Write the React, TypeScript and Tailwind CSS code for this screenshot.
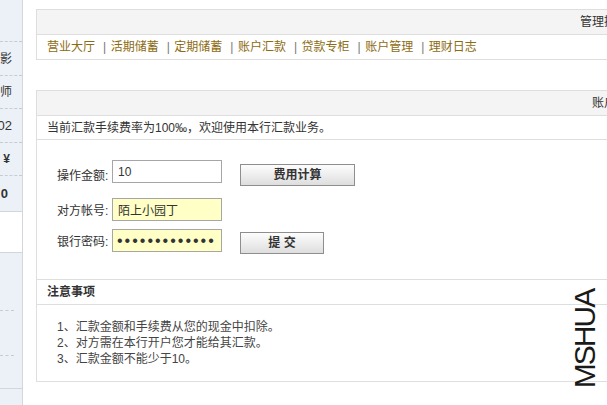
import React from 'react';

const navItems = ['营业大厅', '活期储蓄', '定期储蓄', '账户汇款', '贷款专柜', '账户管理', '理财日志'];

const notes = [
  '1、汇款金额和手续费从您的现金中扣除。',
  '2、对方需在本行开户您才能给其汇款。',
  '3、汇款金额不能少于10。',
];

const App: React.FC = () => {
  return (
    <div className="relative flex w-[607px] h-[405px] overflow-hidden bg-white text-[12px] leading-[16px] text-[#333] font-['Liberation_Sans','Noto_Sans_CJK_SC',sans-serif]">
      {/* 左侧栏（被裁切） */}
      <aside className="w-[23px] shrink-0 flex flex-col overflow-hidden border-r border-[#d2d7de] bg-[#ecf1f8]">
        <div className="h-[42px] shrink-0 border-b border-dashed border-[#c6ccd4]" />
        <div className="h-[34px] shrink-0 flex items-center justify-end pr-[10px] border-b border-dashed border-[#c6ccd4] whitespace-nowrap">
          <span>摄影</span>
        </div>
        <div className="h-[33px] shrink-0 flex items-center justify-end pr-[10px] border-b border-dashed border-[#c6ccd4] whitespace-nowrap">
          <span>魔法师</span>
        </div>
        <div className="h-[34px] shrink-0 flex items-center justify-end pr-[10px] border-b border-dashed border-[#c6ccd4] whitespace-nowrap text-[13px]">
          <span>2013-01-02</span>
        </div>
        <div className="h-[33px] shrink-0 flex items-center justify-end pr-[12px] border-b border-dashed border-[#c6ccd4] whitespace-nowrap font-bold">
          <span>¥</span>
        </div>
        <div className="h-[36px] shrink-0 flex items-center justify-end pr-[14px] border-b border-[#d2d7de] whitespace-nowrap font-bold text-[13px]">
          <span>0</span>
        </div>
        <div className="h-[41px] shrink-0 bg-white border-b border-[#d2d7de]" />
        <div className="h-[58px] shrink-0 border-b border-dashed border-[#c6ccd4] mr-[8px]" />
        <div className="h-[45px] shrink-0 border-b border-dashed border-[#c6ccd4] mr-[8px]" />
        <div className="h-[33px] shrink-0 border-b border-[#d2d7de]" />
        <div className="flex-1" />
      </aside>

      {/* 主区域 */}
      <main className="ml-[13px] shrink-0 w-[615px]">
        {/* 管理面板 */}
        <div className="mt-[9px] border border-[#dedede]">
          <div className="h-[25px] flex items-center justify-end pr-[10px] bg-[#f4f4f4] border-b border-[#dedede]">
            管理操作区
          </div>
          <div className="h-[24px] flex items-center pl-[10px] whitespace-nowrap">
            {navItems.map((item, i) => (
              <React.Fragment key={item}>
                {i > 0 && <span className="ml-[8px] mr-[4.5px] text-[#777]">|</span>}
                <a className="text-[#8d6b12]">{item}</a>
              </React.Fragment>
            ))}
          </div>
        </div>

        {/* 账户汇款 */}
        <div className="mt-[30px] border border-[#dedede]">
          <div className="h-[25px] flex items-center justify-end pr-[10px] bg-[#f4f4f4] border-b border-[#dedede]">
            账户汇款
          </div>
          <div className="h-[24px] flex items-center pl-[10px] border-b border-[#dedede] whitespace-nowrap">
            当前汇款手续费率为100‰，欢迎使用本行汇款业务。
          </div>

          {/* 表单 */}
          <div className="h-[140px] pl-[20px] pt-[20px] border-b border-[#dedede]">
            <div className="flex items-start h-[27px]">
              <label className="w-[55px] mt-[8px]">操作金额:</label>
              <input
                readOnly
                value="10"
                className="w-[110px] h-[23px] px-[5px] border border-[#a6a6a6] bg-white text-[12px] outline-none"
              />
              <button className="ml-[18px] mt-[4px] w-[115px] h-[22px] border border-[#8e8e8e] bg-linear-to-b from-[#fdfdfd] to-[#dedede] font-bold text-[#333]">
                费用计算
              </button>
            </div>
            <div className="flex items-start h-[23px] mt-[11px]">
              <label className="w-[55px] mt-[5px]">对方帐号:</label>
              <input
                readOnly
                value="陌上小园丁"
                className="w-[110px] h-[23px] px-[5px] border border-[#a6a6a6] bg-[#ffffc6] text-[12px] outline-none"
              />
            </div>
            <div className="flex items-start h-[25px] mt-[8px]">
              <label className="w-[55px] mt-[5px]">银行密码:</label>
              <input
                readOnly
                type="password"
                value="1234567890123"
                className="w-[110px] h-[23px] px-[4px] border border-[#a6a6a6] bg-[#ffffc6] text-[16px] tracking-[2px] text-[#333] outline-none"
              />
              <button className="ml-[18px] mt-[3px] w-[84px] h-[22px] border border-[#8e8e8e] bg-linear-to-b from-[#fdfdfd] to-[#dedede] font-bold text-[#333]">
                提 交
              </button>
            </div>
          </div>

          {/* 注意事项 */}
          <div className="h-[25px] flex items-center pl-[10px] border-b border-[#dedede] font-bold">
            注意事项
          </div>
          <div className="h-[76px] pl-[20px] pt-[14px] text-[#444]">
            {notes.map((n) => (
              <div key={n} className="whitespace-nowrap">{n}</div>
            ))}
          </div>
        </div>
      </main>

      {/* 水印 */}
      <div className="absolute left-[585px] top-[339px] -translate-x-1/2 -translate-y-1/2 -rotate-90 whitespace-nowrap leading-none text-[30px] tracking-[-2px] text-[#1a1a1a] font-['Liberation_Sans',sans-serif]">
        MSHUA
      </div>
    </div>
  );
};

export default App;
